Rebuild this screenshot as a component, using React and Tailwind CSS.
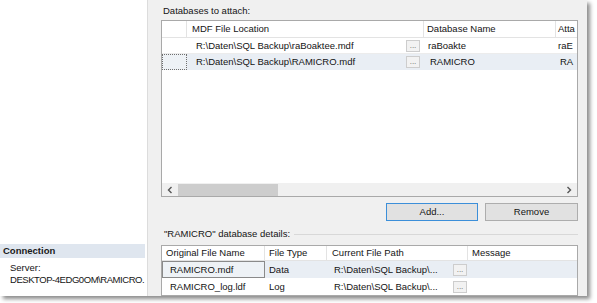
import React from "react";

const Dots = () => (
  <div className="w-[14px] h-[12px] border border-[#cdcdcd] bg-[#f2f2f2] flex items-end justify-center pb-[2px] text-[8px] leading-[6px] text-[#666] shrink-0">
    ...
  </div>
);

export default function App() {
  return (
    <div
      className="w-[597px] h-[303px] bg-white overflow-hidden text-[#141414]"
      style={{ fontFamily: '"Liberation Sans", Arial, sans-serif' }}
    >
      <div className="flex w-[587px] h-[296px] shadow-[3px_3px_4px_rgba(0,0,0,0.45)] text-[9.5px] leading-none">
        {/* Left pane */}
        <div className="w-[148px] shrink-0 bg-white border-r border-[#dcdcdc] flex flex-col justify-end pb-[10px] overflow-hidden">
          <div className="h-[14px] bg-[#dfe6ef] flex items-center pl-[3px] font-bold text-[#1a1a1a] mr-[2px]">
            Connection
          </div>
          <div className="pl-[10px] pt-[4px] leading-[12px] whitespace-nowrap">
            <div>Server:</div>
            <div className="tracking-[-0.45px]">DESKTOP-4EDG0OM\RAMICRO.</div>
          </div>
        </div>

        {/* Right pane */}
        <div className="flex-1 bg-[#f0f0f0] pl-[13px] pr-[9px] flex flex-col">
          <div className="h-[20px] flex items-center pl-[2px] pt-[1px]">Databases to attach:</div>

          {/* Grid 1 */}
          <div className="h-[177px] border border-[#a9a9a9] bg-white flex flex-col overflow-hidden">
            <div className="flex h-[17px] border-b border-[#e3e3e3] shrink-0">
              <div className="w-[25px] border-r border-[#e3e3e3]" />
              <div className="w-[237px] border-r border-[#e3e3e3] flex items-center pl-[5px]">MDF File Location</div>
              <div className="w-[132px] border-r border-[#e3e3e3] flex items-center pl-[3px]">Database Name</div>
              <div className="flex-1 flex items-center pl-[2px] overflow-hidden whitespace-nowrap">Atta</div>
            </div>
            <div className="flex h-[16px] border-b border-[#ececec] shrink-0">
              <div className="w-[25px]" />
              <div className="w-[237px] flex items-center pl-[9px] pr-[4px] justify-between">
                <span>R:\Daten\SQL Backup\raBoaktee.mdf</span>
                <Dots />
              </div>
              <div className="w-[132px] flex items-center pl-[4px]">raBoakte</div>
              <div className="flex-1 flex items-center pl-[2px] overflow-hidden whitespace-nowrap">raE</div>
            </div>
            <div className="flex h-[16px] bg-[#e9eef4] shrink-0">
              <div className="w-[25px] border border-dotted border-[#6f6f6f] bg-[#eef2f6]" />
              <div className="w-[237px] flex items-center pl-[9px] pr-[4px] justify-between">
                <span>R:\Daten\SQL Backup\RAMICRO.mdf</span>
                <Dots />
              </div>
              <div className="w-[132px] flex items-center pl-[6px]">RAMICRO</div>
              <div className="flex-1 flex items-center pl-[4px] overflow-hidden whitespace-nowrap">RA</div>
            </div>
            <div className="flex-1" />
            <div className="h-[13px] bg-[#f0f0f0] flex items-center shrink-0">
              <div className="w-[16px] flex items-center justify-center">
                <svg width="6" height="8" viewBox="0 0 6 8"><path d="M4.5 1 L1.5 4 L4.5 7" fill="none" stroke="#555" strokeWidth="1.4" /></svg>
              </div>
              <div className="w-[100px] h-[12px] bg-[#cdcdcd]" />
              <div className="flex-1" />
              <div className="w-[16px] flex items-center justify-center">
                <svg width="6" height="8" viewBox="0 0 6 8"><path d="M1.5 1 L4.5 4 L1.5 7" fill="none" stroke="#555" strokeWidth="1.4" /></svg>
              </div>
            </div>
          </div>

          {/* Buttons */}
          <div className="flex justify-end gap-[7px] mt-[6px]">
            <div className="w-[92px] h-[18px] border border-[#3c8fd9] bg-[#e1e1e1] flex items-center justify-center">Add...</div>
            <div className="w-[93px] h-[18px] border border-[#adadad] bg-[#e1e1e1] flex items-center justify-center">Remove</div>
          </div>

          {/* Group label */}
          <div className="flex items-center mt-[7px] h-[12px]">
            <span className="pl-[3px] pr-[4px] whitespace-nowrap">"RAMICRO" database details:</span>
            <div className="flex-1 h-px bg-[#d8d8d8]" />
          </div>

          {/* Grid 2 */}
          <div className="mt-[5px] h-[51px] border border-[#a9a9a9] bg-white flex flex-col overflow-hidden">
            <div className="flex h-[15px] border-b border-[#e3e3e3] shrink-0">
              <div className="w-[103px] border-r border-[#e3e3e3] flex items-center pl-[4px]">Original File Name</div>
              <div className="w-[62px] border-r border-[#e3e3e3] flex items-center pl-[4px]">File Type</div>
              <div className="w-[141px] border-r border-[#e3e3e3] flex items-center pl-[5px]">Current File Path</div>
              <div className="flex-1 flex items-center pl-[4px]">Message</div>
            </div>
            <div className="flex h-[17px] bg-[#e9eef4] shrink-0">
              <div className="w-[103px] border border-[#8a8a8a] bg-[#eef2f6] flex items-center pl-[7px]">RAMICRO.mdf</div>
              <div className="w-[62px] flex items-center pl-[4px]">Data</div>
              <div className="w-[141px] flex items-center pl-[7px] pr-[1px] justify-between">
                <span>R:\Daten\SQL Backup\...</span>
                <Dots />
              </div>
              <div className="flex-1" />
            </div>
            <div className="flex h-[17px] shrink-0">
              <div className="w-[103px] flex items-center pl-[8px]">RAMICRO_log.ldf</div>
              <div className="w-[62px] flex items-center pl-[4px]">Log</div>
              <div className="w-[141px] flex items-center pl-[7px] pr-[1px] justify-between">
                <span>R:\Daten\SQL Backup\...</span>
                <Dots />
              </div>
              <div className="flex-1" />
            </div>
          </div>
        </div>
      </div>
    </div>
  );
}
